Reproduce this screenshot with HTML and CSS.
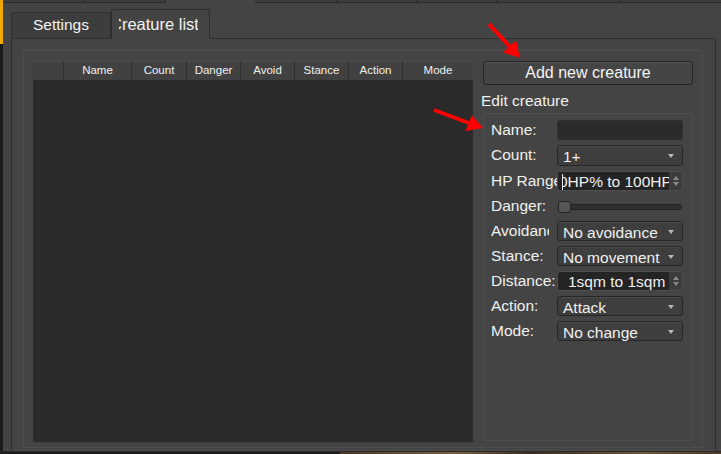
FILE: index.html
```html
<!DOCTYPE html>
<html>
<head>
<meta charset="utf-8">
<link rel="stylesheet" href="styles.css">
</head>
<body>
<div class="screen">
  <div class="main">
    <div class="edge"></div>
    <div class="app">
      <div class="topstrip">
        <span class="seg seg-a"></span>
        <span class="seg seg-b"></span>
        <span class="seg-gap"></span>
        <span class="seg seg-c"></span>
        <span class="seg seg-d"></span>
        <span class="seg seg-d"></span>
        <span class="seg seg-e"></span>
        <span class="seg seg-f"></span>
      </div>
      <div class="tabs">
        <div class="tab">Settings</div>
        <div class="tab active"><div class="tab-clip"><span>Creature list</span></div></div>
      </div>
      <div class="pane">
        <div class="frame">
          <div class="table">
            <div class="thead">
              <div class="th"></div>
              <div class="th">Name</div>
              <div class="th">Count</div>
              <div class="th">Danger</div>
              <div class="th">Avoid</div>
              <div class="th">Stance</div>
              <div class="th">Action</div>
              <div class="th last">Mode</div>
            </div>
            <div class="tbody"></div>
          </div>
          <div class="side">
            <div class="btn">Add new creature</div>
            <div class="side-title">Edit creature</div>
            <div class="group">
              <div class="form">
                <div class="lbl">Name:</div>
                <div class="input"></div>

                <div class="lbl">Count:</div>
                <div class="combo"><span class="combo-text">1+</span><span class="caret-down"></span></div>

                <div class="lbl">HP Range:</div>
                <div class="spin">
                  <div class="spin-text hp"><div class="clip"><span>0HP% to 100HP%</span></div></div>
                  <div class="spin-btns"><span class="up"></span><span class="down"></span></div>
                </div>

                <div class="lbl">Danger:</div>
                <div class="slider"><div class="groove"><div class="handle"></div></div></div>

                <div class="lbl lbl-narrow">Avoidance:</div>
                <div class="combo"><span class="combo-text">No avoidance</span><span class="caret-down"></span></div>

                <div class="lbl">Stance:</div>
                <div class="combo"><span class="combo-text">No movement</span><span class="caret-down"></span></div>

                <div class="lbl">Distance:</div>
                <div class="spin">
                  <div class="spin-text dist">1sqm to 1sqm</div>
                  <div class="spin-btns"><span class="up"></span><span class="down"></span></div>
                </div>

                <div class="lbl">Action:</div>
                <div class="combo"><span class="combo-text">Attack</span><span class="caret-down"></span></div>

                <div class="lbl">Mode:</div>
                <div class="combo"><span class="combo-text">No change</span><span class="caret-down"></span></div>
              </div>
            </div>
          </div>
        </div>
      </div>
    </div>
  </div>
  <div class="footer"><span class="footer-img"></span></div>

  <svg class="arrows" width="721" height="454" viewBox="0 0 721 454">
    <line x1="489" y1="24" x2="510" y2="47" stroke="#f00" stroke-width="4"/>
    <polygon points="520,58 503,52.3 516,40.5" fill="#f00"/>
    <line x1="434" y1="110" x2="469" y2="123" stroke="#f00" stroke-width="4"/>
    <polygon points="483,128 471.8,115.3 465.5,131" fill="#f00"/>
  </svg>
</div>
</body>
</html>
```

FILE: styles.css
```css
body {
  margin: 0;
  background: #1c1c1c;
  font-family: "Liberation Sans", Arial, sans-serif;
  color: #f0f0f0;
}

.screen {
  width: 721px;
  height: 454px;
  position: relative;
  overflow: hidden;
  display: flex;
  flex-direction: column;
  background: #444444;
}

.main {
  display: flex;
  height: 451px;
}

.edge {
  width: 3px;
  flex: none;
  background: linear-gradient(#f2a900 0, #f2a900 44px, #1b1b1b 44px);
}

.app {
  flex: 1;
  display: flex;
  flex-direction: column;
  background: #444444;
}

/* top strip (bottom edges of buttons above) */
.topstrip {
  display: flex;
  height: 3px;
}
.seg {
  height: 3px;
  box-sizing: border-box;
  background: #3d3d3d;
  border-bottom: 1px solid #2b2b2b;
  border-right: 1px solid #2b2b2b;
}
.seg-a { width: 81px; }
.seg-b { width: 82px; }
.seg-gap { width: 89px; }
.seg-c { width: 82px; }
.seg-d { width: 80px; }
.seg-e { width: 124px; }
.seg-f { flex: 1; border-right: none; }

/* tabs */
.tabs {
  display: flex;
  align-items: flex-end;
  height: 29px;
  margin-top: 6px;
  padding-left: 8px;
}
.tab {
  box-sizing: border-box;
  width: 100px;
  height: 26px;
  border: 1px solid #2e2e2e;
  border-bottom: none;
  border-radius: 3px 3px 0 0;
  background: #3d3d3d;
  font-size: 15.5px;
  line-height: 24px;
  text-align: center;
  color: #f2f2f2;
}
.tab.active {
  width: 99px;
  height: 30px;
  background: #444444;
  margin-bottom: -1px;
  position: relative;
  z-index: 1;
  line-height: 28px;
  text-align: left;
  font-size: 16.5px;
}
.tab-clip {
  width: 79px;
  margin-left: 7px;
  overflow: hidden;
  white-space: nowrap;
}
.tab-clip span {
  display: inline-block;
  margin-left: -9px;
}

/* pane */
.pane {
  box-sizing: border-box;
  width: 705px;
  height: 413px;
  margin-left: 8px;
  border: 1px solid #2e2e2e;
  border-bottom-color: #4c4c4c;
  padding: 11px 12px 2px 11px;
  background: #444444;
}
.frame {
  box-sizing: border-box;
  height: 100%;
  border: 1px solid #4e4e4e;
  padding: 10px 9px 5px 9px;
  display: flex;
  gap: 10px;
}

/* table */
.table {
  width: 440px;
  flex: none;
  display: flex;
  flex-direction: column;
  background: #2a2a2a;
}
.thead {
  display: grid;
  grid-template-columns: 31px 68px 55px 54px 54px 54px 54px 70px;
  height: 19px;
  background: #414141;
  box-shadow: inset 0 1px 0 #4a4a4a;
}
.th {
  box-sizing: border-box;
  border-right: 1px solid #303030;
  font-size: 11.5px;
  line-height: 19px;
  text-align: center;
  color: #f0f0f0;
}
.th.last { border-right: none; }
.tbody {
  flex: 1;
  background: #2a2a2a;
}

/* side */
.side {
  width: 210px;
  flex: none;
  display: flex;
  flex-direction: column;
}
.btn {
  box-sizing: border-box;
  height: 24px;
  border: 1px solid #262626;
  border-radius: 3px;
  background: #454545;
  box-shadow: inset 0 1px 0 #525252;
  font-size: 16px;
  line-height: 22px;
  text-align: center;
  color: #f4f4f4;
}
.side-title {
  box-sizing: border-box;
  height: 28px;
  padding-top: 4px;
  line-height: 24px;
  font-size: 15.5px;
  margin-left: -2px;
}
.group {
  flex: 1;
  border: 1px solid #4e4e4e;
  border-radius: 2px;
  padding: 6px 9px 0 7px;
  margin-bottom: 1px;
}

.form {
  display: grid;
  grid-template-columns: 66px 126px;
  grid-template-rows: 20px 21px repeat(7, 20px);
  row-gap: 5px;
}
.lbl {
  font-size: 15.5px;
  line-height: 20px;
  white-space: nowrap;
  overflow: hidden;
  color: #f0f0f0;
}
.lbl-narrow { width: 58px; }

.input {
  box-sizing: border-box;
  background: #2b2b2b;
  border: 1px solid #303030;
  border-radius: 3px;
}

.combo {
  box-sizing: border-box;
  display: flex;
  align-items: center;
  border: 1px solid #262626;
  border-radius: 3px;
  background: #3e3e3e;
  box-shadow: inset 0 1px 0 #4b4b4b;
  padding: 3px 8px 0 5px;
  font-size: 15.5px;
}
.combo-text {
  flex: 1;
  white-space: nowrap;
  overflow: hidden;
  line-height: 16px;
}
.caret-down {
  flex: none;
  width: 0;
  height: 0;
  border-left: 3.5px solid transparent;
  border-right: 3.5px solid transparent;
  border-top: 4px solid #b8b8b8;
  margin-top: -2px;
}

.spin {
  box-sizing: border-box;
  display: flex;
  border: 1px solid #4d4d4d;
  border-radius: 3px;
  background: #3c3c3c;
  overflow: hidden;
}
.spin-text {
  flex: 1;
  min-width: 0;
  display: flex;
  align-items: center;
  background: #242424;
  font-size: 15.5px;
  white-space: nowrap;
  overflow: hidden;
  padding-top: 1px;
}
.spin-text.hp { padding-left: 4px; }
.spin-text.dist { padding-left: 10px; }
.clip {
  overflow: hidden;
  border-left: 1px solid #e8e8e8;
  line-height: 16px;
}
.clip span {
  display: inline-block;
  margin-left: -4px;
}
.spin-btns {
  width: 13px;
  flex: none;
  display: flex;
  flex-direction: column;
  align-items: center;
  justify-content: center;
  gap: 2px;
}
.up {
  width: 0;
  height: 0;
  border-left: 3.5px solid transparent;
  border-right: 3.5px solid transparent;
  border-bottom: 4px solid #8a8a8a;
}
.down {
  width: 0;
  height: 0;
  border-left: 3.5px solid transparent;
  border-right: 3.5px solid transparent;
  border-top: 4px solid #8a8a8a;
}

.slider {
  display: flex;
  align-items: center;
}
.groove {
  flex: 1;
  box-sizing: border-box;
  height: 6px;
  margin: 1px 1px 0 1px;
  border: 1px solid #222222;
  border-radius: 3px;
  background: #2f2f2f;
  display: flex;
  align-items: center;
}
.handle {
  flex: none;
  box-sizing: border-box;
  width: 13px;
  height: 12px;
  margin-left: -1px;
  border: 1px solid #222222;
  border-radius: 3px;
  background: #565656;
}

.footer {
  box-sizing: border-box;
  height: 3px;
  border-top: 1px solid #2a2a2a;
  background: #1d1d1d;
  display: flex;
}
.footer-img {
  margin-left: 340px;
  flex: 1;
  background: linear-gradient(90deg, #4a3a28, #7a6040 30%, #3a2e22 50%, #6e5838 80%, #4a3a28);
}

.arrows {
  position: absolute;
  left: 0;
  top: 0;
  pointer-events: none;
}
```
